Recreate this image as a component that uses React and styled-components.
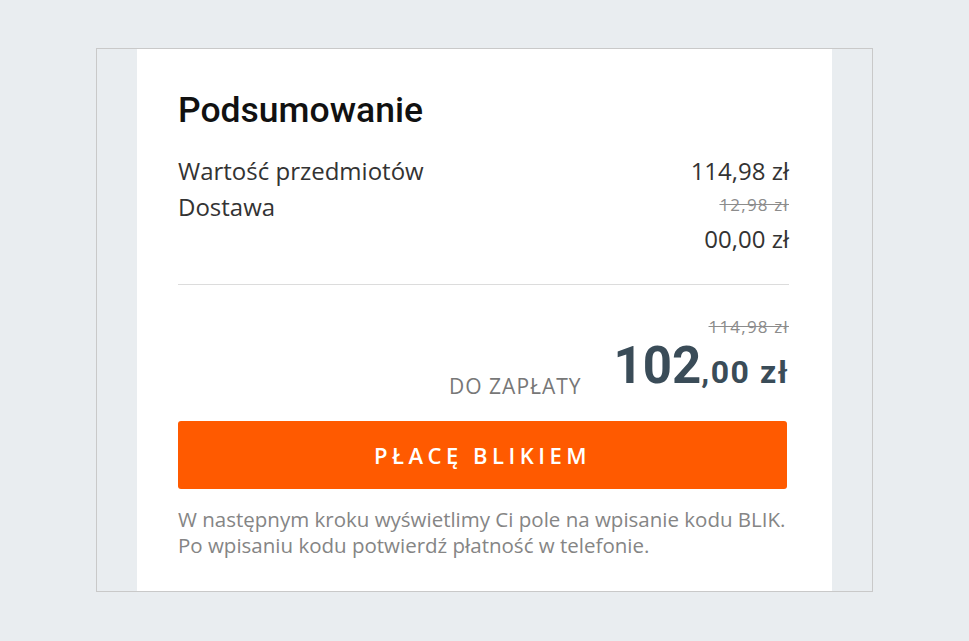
import React from "react";
import styled, { createGlobalStyle } from "styled-components";

const GlobalStyle = createGlobalStyle`
  html, body {
    margin: 0;
    padding: 0;
    background: #e9edf0;
  }
`;

const Page = styled.div`
  padding: 48px 0 0 96px;
`;

const Frame = styled.div`
  width: 695px;
  height: 542px;
  border: 1px solid #c9c9c9;
  background: #e9edf0;
  padding: 0 40px;
  box-sizing: content-box;
  display: flex;
`;

const Card = styled.div`
  flex: 1;
  background: #fff;
  padding: 40px 43px 0 41px;
  box-sizing: border-box;
  font-family: "Open Sans", sans-serif;
`;

const Title = styled.h2`
  margin: 0 0 22px;
  font-family: Roboto, sans-serif;
  font-weight: 500;
  font-size: 35.5px;
  line-height: 42px;
  color: #111;
`;

const Row = styled.div`
  display: flex;
  justify-content: space-between;
  align-items: flex-start;
`;

const Label = styled.div`
  font-size: 24px;
  line-height: 36px;
  color: #333;
`;

const Values = styled.div`
  display: flex;
  flex-direction: column;
  align-items: flex-end;
`;

const Value = styled.div`
  font-size: 24px;
  line-height: 36px;
  color: #333;
`;

const OldValue = styled.div`
  font-size: 17px;
  letter-spacing: 1.2px;
  line-height: ${(p) => p.$lh || "32px"};
  color: #8c8c8c;
  text-decoration: line-through;
`;

const Divider = styled.hr`
  border: 0;
  border-top: 1px solid #dcdcdc;
  margin: 27px 0 30px;
`;

const Total = styled.div`
  display: flex;
  flex-direction: column;
  align-items: flex-end;
`;

const TotalLine = styled.div`
  display: flex;
  align-items: flex-end;
  gap: 32px;
`;

const TotalLabel = styled.span`
  font-size: 21px;
  line-height: 26px;
  letter-spacing: 1px;
  color: #777;
  text-transform: uppercase;
`;

const Amount = styled.span`
  font-family: Roboto, sans-serif;
  font-weight: 700;
  color: #3a4c58;
  font-size: 51px;
  line-height: 54px;
`;

const Cents = styled.span`
  font-size: 32px;
  letter-spacing: 1.5px;
`;

const PayButton = styled.button`
  display: block;
  width: 609px;
  height: 68px;
  margin-top: 22px;
  border: 0;
  border-radius: 3px;
  background: #ff5a00;
  color: #fff;
  font-family: "Open Sans", sans-serif;
  font-weight: 600;
  font-size: 22px;
  letter-spacing: 4.5px;
  cursor: pointer;
`;

const Note = styled.p`
  margin: 17px 0 0;
  font-size: 20.5px;
  line-height: 26px;
  color: #858585;
  white-space: nowrap;
`;

export default function App() {
  return (
    <>
      <GlobalStyle />
      <Page>
        <Frame>
          <Card>
            <Title>Podsumowanie</Title>
            <Row>
              <Label>Wartość przedmiotów</Label>
              <Value>114,98 zł</Value>
            </Row>
            <Row>
              <Label>Dostawa</Label>
              <Values>
                <OldValue>12,98 zł</OldValue>
                <Value>00,00 zł</Value>
              </Values>
            </Row>
            <Divider />
            <Total>
              <OldValue $lh="24px">114,98 zł</OldValue>
              <TotalLine>
                <TotalLabel>Do zapłaty</TotalLabel>
                <Amount>
                  102<Cents>,00 zł</Cents>
                </Amount>
              </TotalLine>
            </Total>
            <PayButton>PŁACĘ BLIKIEM</PayButton>
            <Note>
              W następnym kroku wyświetlimy Ci pole na wpisanie kodu BLIK.
              <br />
              Po wpisaniu kodu potwierdź płatność w telefonie.
            </Note>
          </Card>
        </Frame>
      </Page>
    </>
  );
}
